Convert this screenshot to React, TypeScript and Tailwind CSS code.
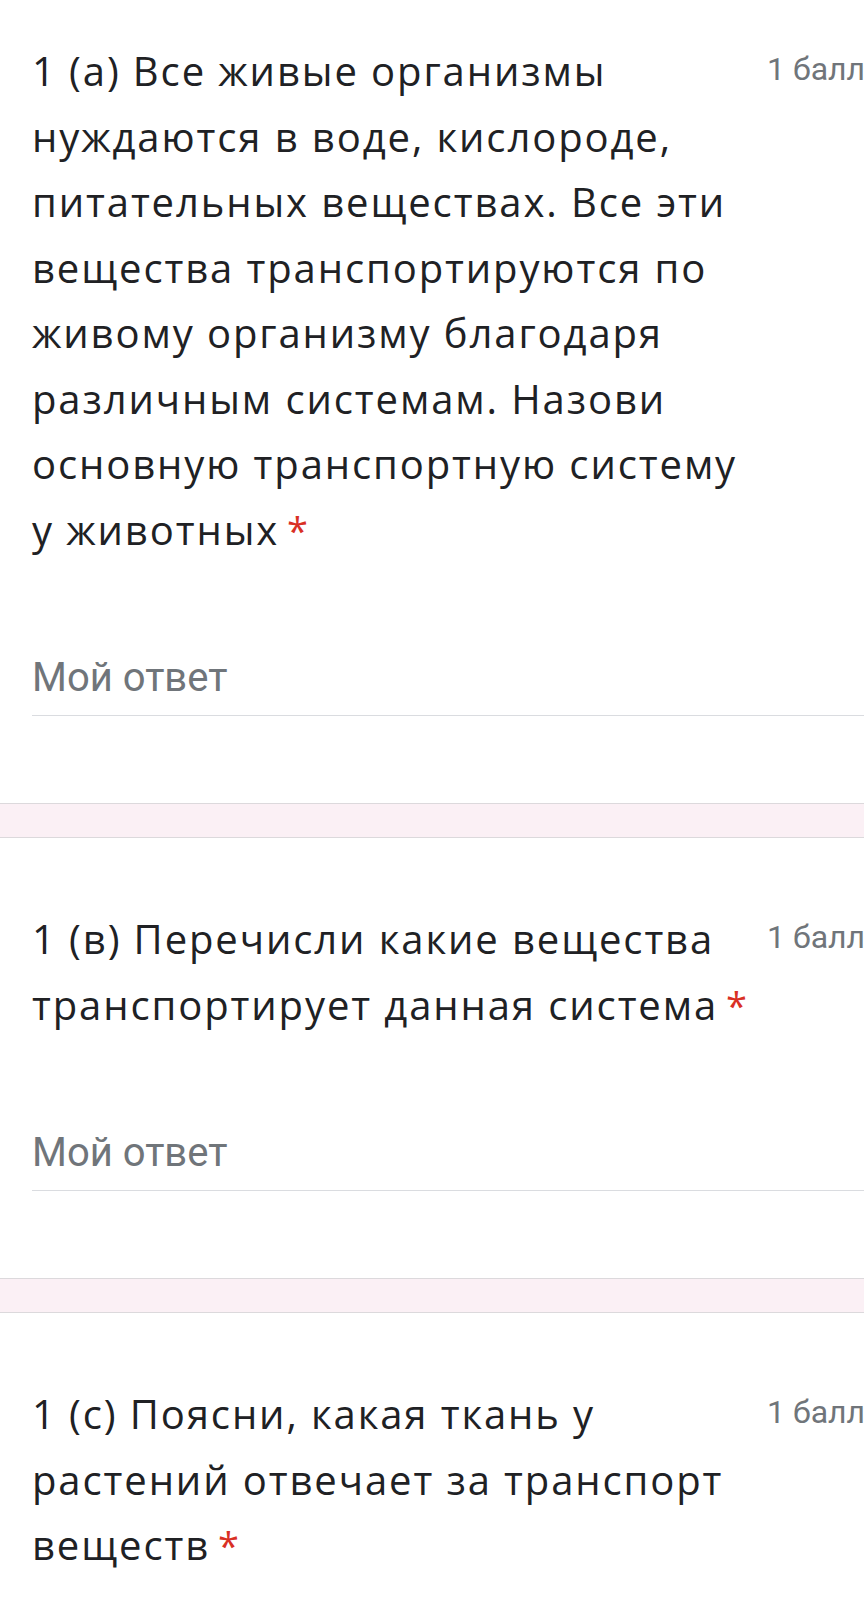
import React from 'react';

type Question = {
  lines: string[];
  points: string;
};

const questions: Question[] = [
  {
    lines: [
      '1 (а) Все живые организмы',
      'нуждаются в воде, кислороде,',
      'питательных веществах. Все эти',
      'вещества транспортируются по',
      'живому организму благодаря',
      'различным системам. Назови',
      'основную транспортную систему',
      'у животных',
    ],
    points: '1 балл',
  },
  {
    lines: ['1 (в) Перечисли какие вещества', 'транспортирует данная система'],
    points: '1 балл',
  },
  {
    lines: ['1 (с) Поясни, какая ткань у', 'растений отвечает за транспорт', 'веществ'],
    points: '1 балл',
  },
];

const QuestionCard = ({ q, first, last }: { q: Question; first?: boolean; last?: boolean }) => {
  return (
    <div className={`bg-white pl-[32px] ${first ? 'pt-[38px]' : 'pt-[68px]'} ${last ? 'pb-[40px]' : 'pb-[87px]'}`}>
      <div className="flex items-start">
        {/* Question title */}
        <div className="w-[735px] shrink-0 text-[40px] leading-[65.5px] tracking-[1.9px] text-[#202124] font-['Open_Sans',sans-serif]">
          {q.lines.map((line, i) => (
            <div key={i} className="whitespace-nowrap">
              {line}
              {i === q.lines.length - 1 && (
                <span className="ml-[8px] text-[38px] tracking-normal text-[#d93025] align-baseline">*</span>
              )}
            </div>
          ))}
        </div>
        <div className="whitespace-nowrap pt-[7px] text-[32px] leading-[48px] text-[#70757a] font-['Roboto',sans-serif]">
          {q.points}
        </div>
      </div>

      {/* Answer field */}
      {!last && (
        <div className="mt-[91px]">
          <div className="text-[40px] leading-[48px] text-[#70757a] font-['Roboto',sans-serif]">Мой ответ</div>
          <div className="mt-[13px] h-px bg-[#dadce0]"></div>
        </div>
      )}
    </div>
  );
};

export default function App() {
  return (
    <div className="w-[864px] h-[1612px] overflow-hidden bg-white">
      {questions.map((q, i) => (
        <React.Fragment key={i}>
          {i > 0 && (
            <div className="h-[35px] bg-[#fbf0f5] border-y border-[#dcd9dc]"></div>
          )}
          <QuestionCard q={q} first={i === 0} last={i === questions.length - 1} />
        </React.Fragment>
      ))}
    </div>
  );
}
